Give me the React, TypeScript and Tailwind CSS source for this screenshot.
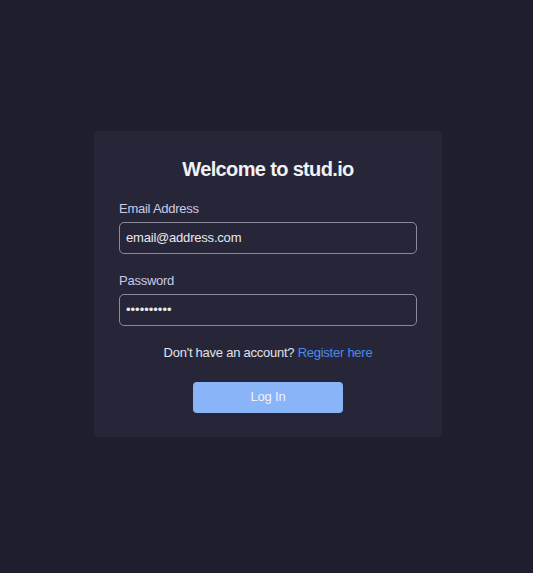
import React from 'react';

export default function App() {
  return (
    <div className="min-h-screen w-full bg-[#1f1e2e] flex items-center justify-center pb-[6px] pl-[3px] font-['Liberation_Sans',Arial,sans-serif]">
      <div className="w-[348px] bg-[#272638] rounded-sm px-[25px] pt-6 pb-6">
        <h1 className="text-center text-[20px] leading-7 font-bold tracking-[-0.65px] text-[#f1f1f4]">Welcome to stud.io</h1>

        <form className="mt-[17px]" onSubmit={(e) => e.preventDefault()}>
          <label className="block text-[13px] leading-[18px] tracking-[-0.25px] text-[#c9cbe9] mb-1">Email Address</label>
          <input
            type="email"
            defaultValue="email@address.com"
            className="w-full h-8 px-[6px] rounded-[5px] border border-[#8a8a9c] bg-transparent text-[13px] tracking-[-0.2px] text-[#e8e8ee] outline-none"
          />

          <label className="block mt-[18px] text-[13px] leading-[18px] tracking-[-0.25px] text-[#c9cbe9] mb-1">Password</label>
          <input
            type="password"
            defaultValue="0123456789"
            className="w-full h-8 px-[6px] rounded-[5px] border border-[#8a8a9c] bg-transparent text-[13px] text-[#e8e8ee] outline-none"
          />

          <p className="mt-[18px] text-center text-[13px] leading-[18px] tracking-[-0.25px] text-[#e2e2e8]">
            Don't have an account? <a href="#" className="text-[#4a8af0]">Register here</a>
          </p>

          <div className="mt-5 flex justify-center">
            <button
              type="submit"
              className="w-[150px] h-[31px] rounded-[4px] bg-[#8ab4f8] text-[13px] tracking-[-0.2px] text-[#eef3fd]"
            >
              Log In
            </button>
          </div>
        </form>
      </div>
    </div>
  );
}
